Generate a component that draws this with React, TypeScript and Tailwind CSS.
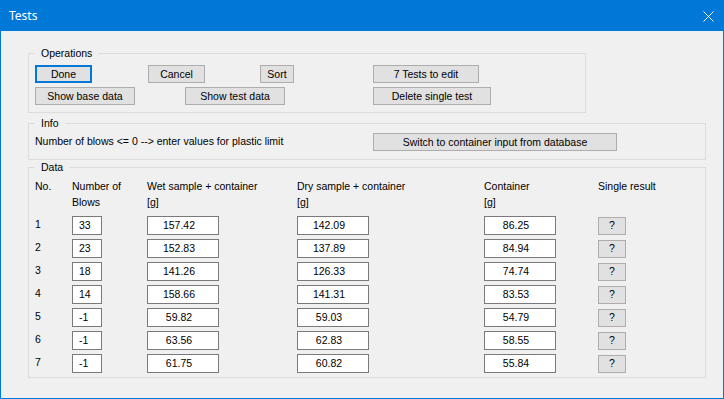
import React from "react";
import clsx from "clsx";

type Row = { no: number; blows: string; wet: string; dry: string; container: string };

const rows: Row[] = [
  { no: 1, blows: "33", wet: "157.42", dry: "142.09", container: "86.25" },
  { no: 2, blows: "23", wet: "152.83", dry: "137.89", container: "84.94" },
  { no: 3, blows: "18", wet: "141.26", dry: "126.33", container: "74.74" },
  { no: 4, blows: "14", wet: "158.66", dry: "141.31", container: "83.53" },
  { no: 5, blows: "-1", wet: "59.82", dry: "59.03", container: "54.79" },
  { no: 6, blows: "-1", wet: "63.56", dry: "62.83", container: "58.55" },
  { no: 7, blows: "-1", wet: "61.75", dry: "60.82", container: "55.84" },
];

function WinButton({
  children,
  className,
  focused = false,
}: {
  children: React.ReactNode;
  className?: string;
  focused?: boolean;
}) {
  return (
    <button
      className={clsx(
        "h-[18px] bg-[#e1e1e1] text-[10.5px] leading-none text-black flex items-center justify-center",
        focused ? "border-2 border-[#0078d7]" : "border border-[#adadad]",
        className
      )}
    >
      {children}
    </button>
  );
}

function Group({
  label,
  className,
  children,
}: {
  label: string;
  className?: string;
  children: React.ReactNode;
}) {
  return (
    <fieldset className={clsx("border border-[#dcdcdc] px-0", className)}>
      <legend className="ml-[6px] px-[6px] text-[10.5px] leading-[14px]">{label}</legend>
      {children}
    </fieldset>
  );
}

function Field({ value, left = false, className }: { value: string; left?: boolean; className?: string }) {
  return (
    <div
      className={clsx(
        "h-[19px] border border-[#7a7a7a] bg-white flex items-center text-[10.5px] leading-none",
        left ? "pl-[6px]" : "justify-center pr-[8px]",
        className
      )}
    >
      {value}
    </div>
  );
}

export default function App() {
  return (
    <div
      className="w-[724px] h-[399px] border border-[#0078d7] bg-[#f0f0f0] flex flex-col text-black"
      style={{ fontFamily: '"Liberation Sans", Arial, sans-serif' }}
    >
      <div className="h-[30px] bg-[#0078d7] flex items-center justify-between pl-[8px] pr-[9px] shrink-0">
        <span className="text-white text-[12px]" style={{ fontFamily: '"Noto Sans", "Open Sans", sans-serif' }}>
          Tests
        </span>
        <svg width="11" height="11" viewBox="0 0 11 11">
          <path d="M0.5 0.5 L10.5 10.5 M10.5 0.5 L0.5 10.5" stroke="white" strokeWidth="1" />
        </svg>
      </div>

      <div className="pl-[27px] flex flex-col">
        <Group label="Operations" className="mt-[15px] w-[558px]">
          <div className="pt-[5px] pb-[7px] pl-[6px] flex flex-col gap-[4px]">
            <div className="flex">
              <WinButton focused className="w-[57px]">Done</WinButton>
              <WinButton className="w-[57px] ml-[56px]">Cancel</WinButton>
              <WinButton className="w-[34px] ml-[55px]">Sort</WinButton>
              <WinButton className="w-[106px] ml-[79px]">7 Tests to edit</WinButton>
            </div>
            <div className="flex">
              <WinButton className="w-[100px]">Show base data</WinButton>
              <WinButton className="w-[100px] ml-[50px]">Show test data</WinButton>
              <WinButton className="w-[118px] ml-[88px]">Delete single test</WinButton>
            </div>
          </div>
        </Group>

        <Group label="Info" className="mt-[3px] w-[678px]">
          <div className="pt-[3px] pb-[8px] pl-[6px] flex items-center">
            <span className="text-[10.5px] w-[338px]">
              Number of blows &lt;= 0 --&gt; enter values for plastic limit
            </span>
            <WinButton className="w-[244px]">Switch to container input from database</WinButton>
          </div>
        </Group>

        <Group label="Data" className="w-[678px]">
          <div className="pt-[4px] pb-[4px] pl-[6px]">
            <div className="grid grid-cols-[37px_75px_150px_187px_114px_auto] text-[10.5px] leading-[16px]">
              <span>No.</span>
              <span>
                Number of
                <br />
                Blows
              </span>
              <span>
                Wet sample + container
                <br />
                [g]
              </span>
              <span>
                Dry sample + container
                <br />
                [g]
              </span>
              <span>
                Container
                <br />
                [g]
              </span>
              <span>Single result</span>
            </div>
            <div className="mt-[6px] flex flex-col gap-[4px]">
              {rows.map((row) => (
                <div
                  key={row.no}
                  className="grid grid-cols-[37px_75px_150px_187px_114px_auto] items-center text-[10.5px]"
                >
                  <span className="-mt-[1px]">{row.no}</span>
                  <Field value={row.blows} left className="w-[30px]" />
                  <Field value={row.wet} className="w-[72px]" />
                  <Field value={row.dry} className="w-[72px]" />
                  <Field value={row.container} className="w-[72px]" />
                  <WinButton className="w-[28px]">?</WinButton>
                </div>
              ))}
            </div>
          </div>
        </Group>
      </div>
    </div>
  );
}
